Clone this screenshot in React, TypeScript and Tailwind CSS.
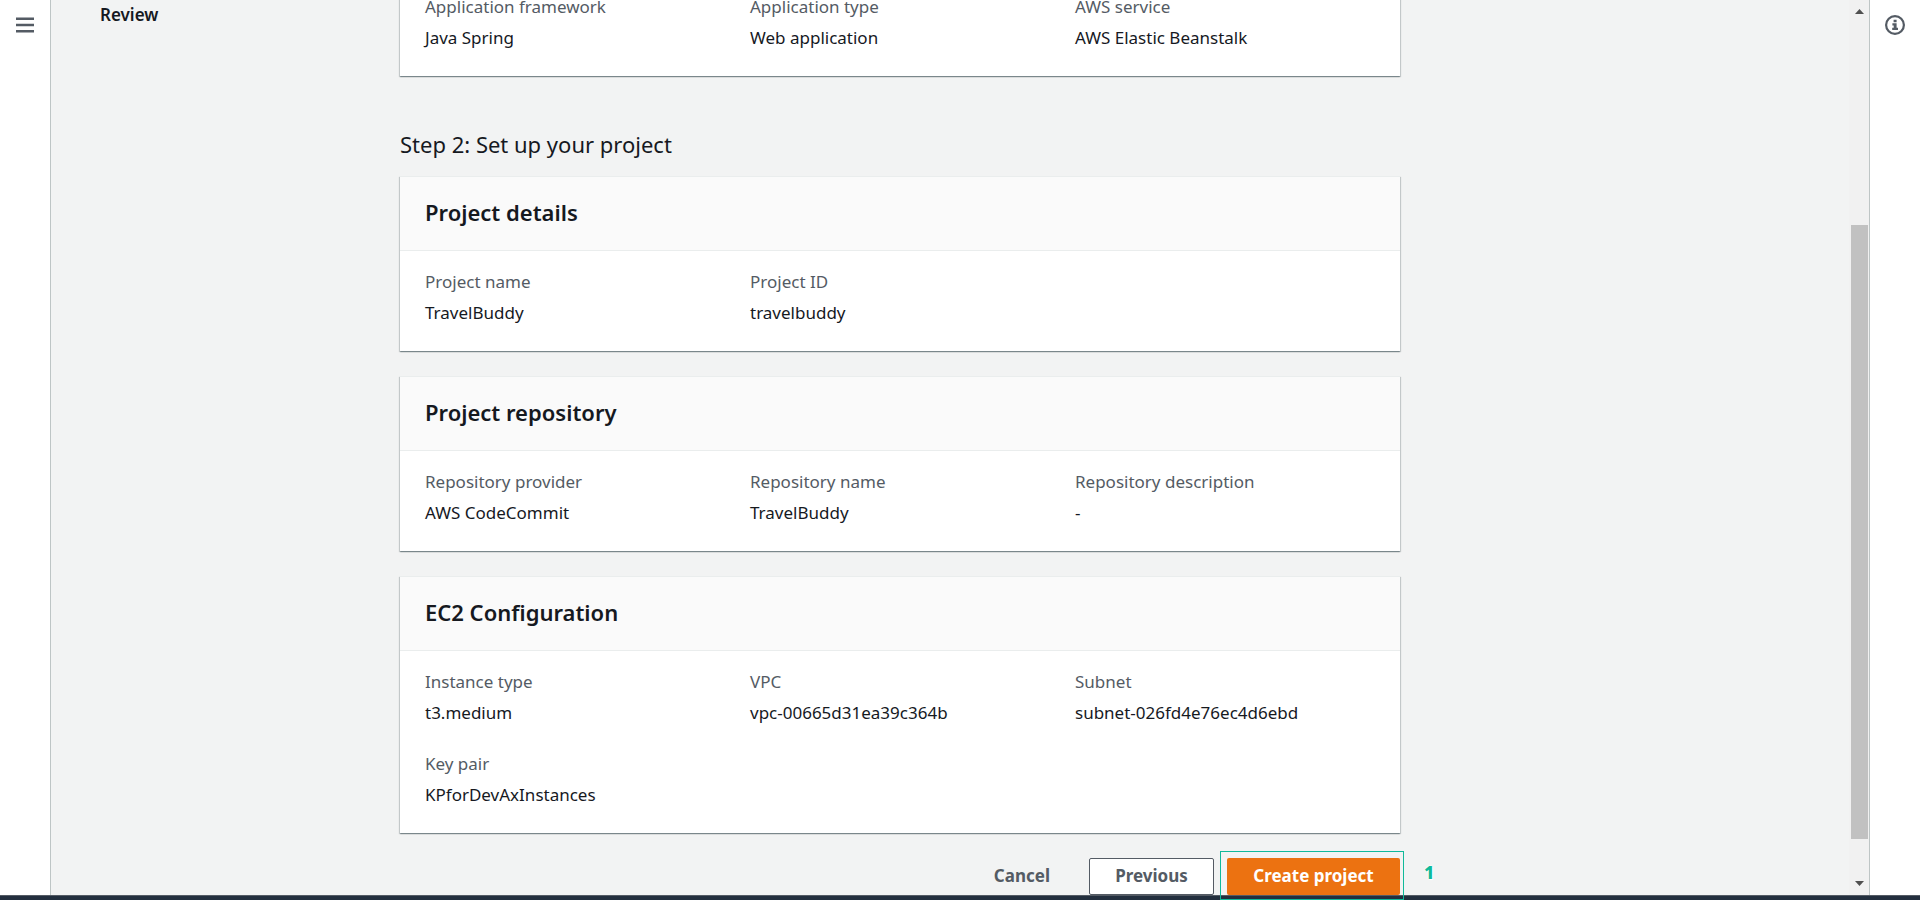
import React from "react";

type Field = {
  label: string;
  value: string;
};

const frameworkFields: Field[] = [
  { label: "Application framework", value: "Java Spring" },
  { label: "Application type", value: "Web application" },
  { label: "AWS service", value: "AWS Elastic Beanstalk" },
];

const detailFields: Field[] = [
  { label: "Project name", value: "TravelBuddy" },
  { label: "Project ID", value: "travelbuddy" },
];

const repositoryFields: Field[] = [
  { label: "Repository provider", value: "AWS CodeCommit" },
  { label: "Repository name", value: "TravelBuddy" },
  { label: "Repository description", value: "-" },
];

const ec2Fields: Field[] = [
  { label: "Instance type", value: "t3.medium" },
  { label: "VPC", value: "vpc-00665d31ea39c364b" },
  { label: "Subnet", value: "subnet-026fd4e76ec4d6ebd" },
  { label: "Key pair", value: "KPforDevAxInstances" },
];

function Card({ title, fields }: { title?: string; fields: Field[] }) {
  return (
    <section className="bg-white border-t border-[#eaeded] shadow-[0_1px_1px_0_rgba(0,28,36,0.3),1px_1px_1px_0_rgba(0,28,36,0.15),-1px_1px_1px_0_rgba(0,28,36,0.15)]">
      {title && (
        <header className="bg-[#fafafa] border-b border-[#eaeded] px-[25px] pt-5 pb-[22px]">
          <h3 className="text-[22px] leading-[31px] font-semibold">{title}</h3>
        </header>
      )}
      <dl className="grid grid-cols-3 gap-x-[25px] gap-y-[26px] px-[25px] pt-[18px] pb-[26px]">
        {fields.map((field) => (
          <div key={field.label}>
            <dt className="text-[#545b64] mb-[6px]">{field.label}</dt>
            <dd>{field.value}</dd>
          </div>
        ))}
      </dl>
    </section>
  );
}

function Scrollbar() {
  return (
    <div className="w-[20px] shrink-0 flex flex-col items-center bg-[#f1f1f1] pl-[2px] pr-px py-[9px]">
      <svg width="9" height="5" viewBox="0 0 9 5" fill="#505050">
        <path d="M0 5 4.5 0 9 5z" />
      </svg>
      <div className="grow-[211]" />
      <div className="w-[17px] grow-[614] bg-[#c1c1c1]" />
      <div className="grow-[42]" />
      <svg width="9" height="5" viewBox="0 0 9 5" fill="#505050">
        <path d="M0 0 4.5 5 9 0z" />
      </svg>
    </div>
  );
}

export default function App() {
  return (
    <div className="h-screen flex flex-col bg-[#f2f3f3] text-[#16191f] text-[17px] leading-[25px] font-['Noto_Sans','Open_Sans',sans-serif]">
      <div className="flex-1 min-h-0 flex">
        <aside className="w-[51px] shrink-0 bg-white border-r border-[#bec5c5] flex flex-col items-center pt-4">
          <button aria-label="Open navigation" className="text-[#545b64]">
            <svg width="18" height="18" viewBox="0 0 18 18" stroke="currentColor" strokeWidth="2.4">
              <path d="M0 2.7h18M0 9h18M0 15.3h18" />
            </svg>
          </button>
        </aside>

        <main className="flex-1 min-w-0 flex items-stretch pl-[49px]">
          <nav className="w-[300px] shrink-0 pt-[2px] text-[17px] font-semibold">Review</nav>

          <div className="flex-1 max-w-[1000px] min-w-0 flex flex-col justify-end">
            <Card fields={frameworkFields} />
            <h2 className="text-[22px] leading-[30px] mt-[53px] mb-[17px]">Step 2: Set up your project</h2>
            <div className="flex flex-col gap-[25px]">
              <Card title="Project details" fields={detailFields} />
              <Card title="Project repository" fields={repositoryFields} />
              <Card title="EC2 Configuration" fields={ec2Fields} />
            </div>

            <div className="flex justify-end gap-[13px] mt-[25px] font-bold text-[#545b64]">
              <button className="h-[37px] px-[26px] pb-[2px]">Cancel</button>
              <button className="h-[37px] w-[125px] pb-[2px] bg-white border border-[#545b64] rounded-[2px]">
                Previous
              </button>
              <div className="relative">
                <button className="h-[37px] w-[173px] pb-[2px] bg-[#ec7211] text-white rounded-[2px]">
                  Create project
                </button>
                <div className="absolute z-10 -top-[7px] -bottom-[5px] -left-[7px] -right-1 border border-[#10b99a] pointer-events-none" />
                <span className="absolute left-full top-[2px] ml-6 text-[18px] font-extrabold text-[#10b99a] [text-shadow:0_0_2px_#fff,0_0_2px_#fff,1px_1px_1px_#fff]">
                  1
                </span>
              </div>
            </div>
          </div>
        </main>

        <Scrollbar />

        <aside className="w-[51px] shrink-0 bg-white border-l border-[#bec5c5] flex flex-col items-center pt-[15px]">
          <button aria-label="Info" className="text-[#545b64]">
            <svg width="20" height="20" viewBox="0 0 20 20" fill="currentColor">
              <circle cx="10" cy="10" r="8.9" fill="none" stroke="currentColor" strokeWidth="2.2" />
              <path d="M8.6 4.8h3v2.4h-3zM7.4 8.2h4.2v4.6h1.4V15H7.2v-2.2h1.5v-2.4H7.4z" />
            </svg>
          </button>
        </aside>
      </div>
      <footer className="h-[5px] shrink-0 bg-[#232f3e] border-t border-[#545b64]" />
    </div>
  );
}
